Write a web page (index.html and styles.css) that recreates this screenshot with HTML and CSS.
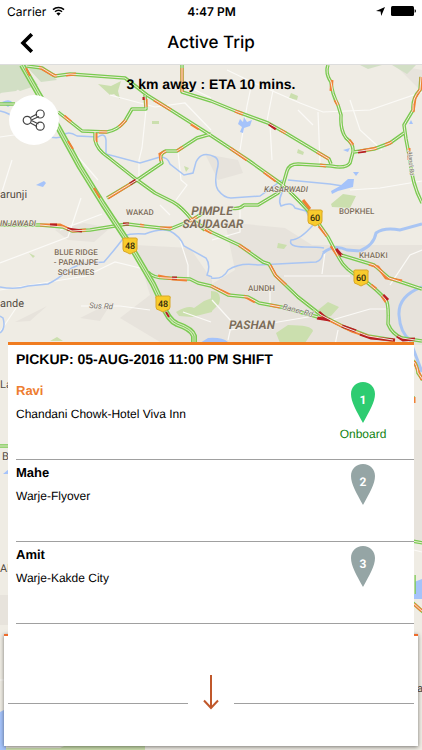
FILE: index.html
```
<!DOCTYPE html>
<html lang="en">
<head>
  <meta charset="UTF-8" />
  <meta name="viewport" content="width=device-width, initial-scale=1" />
  <title>Active Trip</title>
  <link rel="stylesheet" href="styles.css">
</head>
<body>

<div class="status-bar">
  <div class="carrier">
    <span>Carrier</span>
    <svg width="13" height="10" viewBox="0 0 13 10" aria-hidden="true">
      <path d="M1 3.6a8 8 0 0 1 11 0M3 5.8a5 5 0 0 1 7 0" fill="none" stroke="#000" stroke-width="1.5"/>
      <path d="M6.5 9.8L4.4 7.6a3 3 0 0 1 4.2 0z"/>
    </svg>
  </div>
  <div class="clock">4:47 PM</div>
  <div class="battery">
    <svg width="9" height="9" viewBox="0 0 9 9" aria-hidden="true"><path d="M9 0L5.2 9L4.6 4.5L0 4.1z"/></svg>
    <svg width="25" height="10" viewBox="0 0 25 10" aria-hidden="true">
      <rect width="23" height="10" rx="1.5"/><path d="M23.6 3.2q1.4.2 1.4 1.8t-1.4 1.8z"/>
    </svg>
  </div>
</div>

<header class="nav-bar">
  <button class="back-btn" type="button" aria-label="Back">
    <svg width="14" height="20" viewBox="0 0 14 20"><path d="M11.8 1.2L3 10l8.8 8.8" fill="none" stroke="#000" stroke-width="3.6"/></svg>
  </button>
  <h1>Active Trip</h1>
</header>

<main class="trip">
  <svg class="map" viewBox="0 65 422 685" preserveAspectRatio="xMidYMin slice" aria-hidden="true">
    <defs>
      <g id="highways">
        <path d="M22 65L38 93L58 127L80 167L103 204L130 245L153 284L163 305Q168 320 177 324Q192 329 194 336V345"/>
      </g>
      <g id="roads">
        <path d="M27 66L42 68L55 76L70 74L125 78L147 95L163 105L204 131L248 160L283 185L300 202L314 217L328 237L339 258Q345 270 361 278Q378 290 386 300Q389 305 388 324Q392 334 402 338L422 341"/>
        <path d="M0 104H15"/>
        <path d="M58 112L82 131L107 132Q118 130 125 121L132 109H146L145 95"/>
        <path d="M95 132V140Q97 150 108 157L137 180L155 193L173 202Q182 207 192 220L211 232L239 245L263 262L269 264L275 275L298 297L321 315L344 327L368 336L393 340"/>
        <path d="M107 198L137 180L162 163Q158 154 166 151H177L197 138L211 134"/>
        <path d="M182 65V92L211 101L238 112L268 123L284 132L329 159L331 164"/>
        <path d="M328 65Q325 73 331 82Q332 94 338 105L341 115Q340 130 346 138Q354 144 353 152L350 163Q346 169 331 166L298 164Q289 164 287 171L283 185"/>
        <path d="M354 152L374 149L390 143L404 133"/>
        <path d="M421 77L420 90Q412 98 413 110L404 125L406 139L410 160Q412 184 422 203"/>
        <path d="M283 185L278 193L258 205L244 205Q239 210 231 208"/>
        <path d="M0 225H40L63 227L72 231L90 230L127 224L143 226L170 229L192 220L203 213M192 220L205 230"/>
        <path d="M148 272Q153 278 165 278L190 279L198 283L211 286L228 295L248 297L259 303L281 307L318 317"/>
        <path d="M341 255L374 265L389 278L422 289"/>
        <path d="M413 361Q417 364 418 373L423 380M413 396V403M0 446H9M412 541L423 543M412 602L423 612M414 575V594"/>
      </g>
    </defs>

    <rect class="land" y="65" width="422" height="685"/>

    <g class="urban">
      <path d="M135 245L190 248L212 280L212 345H165L120 318L150 295z"/>
      <path d="M225 222L285 228L312 245L422 245V345H212V284L235 270z"/>
      <path d="M55 230L84 223L110 228L94 242L68 240zM80 318L112 302L100 321zM15 322L47 306L30 321zM395 65L422 70V92z"/>
      <path d="M205 154L238 160L243 173L218 180z"/>
      <path d="M0 595h8v30H0zM414 430h8v110h-8z"/>
    </g>

    <g class="parks">
      <path d="M0 65h23l15 20-18 6-12-8-8 11zM25 65l18 1 14 14-16 2z"/>
      <path d="M0 75l20-4 8 10-12 10-16 2zM360 65l22 0-14 4zM392 65h24l-9 9z"/>
      <path d="M98 84l13 2 10-5-3 10 2 8-6-5-4 1z"/>
      <path d="M291 93l7 3-1 4-8-2zM152 121h7v3h-7zM298 149l6 3-1 3-6-2zM331 204l12-10 13 2-6 12-18-1zM278 243l9 2-3 4-7-1z"/>
      <path d="M176 312q12-7 18-4l10-7 8-3v14l-20 5-13-1zM211 291q12 0 8 13l-8 8zM318 310l10-8 11 5-8 9-8 1zM276 333l12-8q24 0 25 6l-8 12h-25zM29 253l6 3-2 2zM184 166l5 2-3 4z"/>
      <path d="M50 341l7-4 6 4zM5 748h55l15-7h70v9H5z"/>
    </g>

    <g class="minor-roads">
      <path d="M0 137L34 132L52 113M0 198L12 160M146 110L142 148L139 160V180M66 143L98 180M110 95L155 107L185 103L211 130"/>
      <path d="M178 152L181 180L187 185L176 200M227 70L252 82L247 106L240 150M211 98L185 85M252 82L300 103L323 112L370 110L422 92"/>
      <path d="M318 112L320 163M298 110L313 125M267 121L275 80M270 125L272 160M0 263L68 237L81 198M102 214L60 230M0 290L86 276L115 262L148 270M81 306L120 306L150 310M183 312L211 322"/>
      <path d="M212 240L240 232V208M212 300L232 322L228 340M230 330L320 315M270 290V303M284 276H350M325 252L322 274M338 330L335 345M332 320L370 309H386M390 285L410 255L422 250M350 190L380 188L422 181M180 240L188 265V278M160 205L170 215"/>
      <path d="M0 680H6M414 550L422 552M0 332L18 305M350 100L360 130L382 150"/>
    </g>

    <g class="rivers">
      <path d="M0 111Q10 113 15 119L28 128Q55 142 62 136Q68 130 77 136L98 137Q105 132 106 140V154L140 163L160 157Q168 157 170 164L184 175L193 173L196 162Q202 150 215 157Q220 160 217 170Q214 184 218 190Q224 198 231 198L260 196L282 180"/>
      <path d="M0 287Q15 290 28 286L48 284Q60 278 65 272Q78 263 92 263L104 262Q117 247 125 236Q130 233 145 234Q160 228 170 231Q180 236 184 246L206 258Q211 265 207 275L212 277"/>
      <path d="M288 180L330 184L343 186M285 187Q277 200 281 206Q292 201 295 208L306 211L313 225"/>
      <path d="M313 225Q300 240 291 240Q288 247 305 247Q318 247 324 248" />
      <path d="M211 278Q223 280 228 270Q240 262 258 265L316 262Q322 260 323 253"/>
      <path class="wide" d="M323 253Q334 244 347 250L360 251Q374 245 376 233Q384 227 400 230L422 224"/>
      <path class="wide" d="M422 287Q398 296 399 315Q400 333 411 341M411 343L422 372"/>
      <path d="M0 333Q6 328 3 318L0 316"/>
    </g>
    <g class="water">
      <path d="M36 185l8-4 2 2-3 4zM2 102q8-4 11 1l-5 4zM240 119l3 3 1-5 3 5 5-2-2 6-6 2-1 5-3-1 2-5-4-3zM331 191l9-5 8-7 6 0-1 8-15 4-6 3zM353 172h6l-3 4zM343 150l7-2-2 4zM409 124l2-4 2 4zM200 343l8-5q14-1 20 4v4h-28z"/>
      <path d="M3 474l6-5v5zM414 582l8-3v20h-8zM0 712l4-2v40h-4zM0 712h6v38H0z"/>
    </g>

    <use href="#roads" class="road-line"/>

    <g class="slow">
      <path d="M39 67L53 75L57 76M66 75L76 74M64 116l7 6M96 133v9M99 132h8M119 127l7-7M146 107V99M154 100l17 10M191 124l8 5M108 198L132 183M161 161L160 154L166 151M177 151l6-4"/>
      <path d="M235 111l8 3M280 130l6 3M317 152L329 159M332 80l-1 11M335 100l3 5M349 140l4 5M320 165l6 1M360 151l17-3M385 145l7-3M230 148l17 12M264 172l12 9M303 200l7 9M421 77V88L415 98L413 112M409 148v12M182 68v24"/>
      <path d="M40 225H60L73 231L86 230M140 225l4 1M160 228h12M186 223L197 217M190 218l8 8M204 229l8 4M158 276l15 3 14 1M211 286l11 5 8 4M244 296l11 6M270 305l10 2M239 245l11 7M270 265l6 11 10 9M319 226l8 10M331 246l7 10M371 285l5 4M382 296l4 6M369 264l9 3 8 11 16 3M321 316L352 331L370 337L395 341M414 361l5 12 3 7M414 397v6M414 604l8 7"/>
    </g>
    <g class="jammed">
      <path d="M130 184l6-4M144 97v3M269 124l7 5M358 152l8-1M50 225h7M67 229l15 2M123 224h6M172 278h5M336 249l6 7M383 295l5 5M319 312l9 8M317 318l13 2M342 326l14 5M360 334l11 4 24 2M397 336l6 4 12-1"/>
    </g>
    <use href="#roads" class="road-median"/>

    <use href="#highways" class="highway-line"/>
    <use href="#highways" class="highway-lanes"/>
    <use href="#highways" class="highway-median"/>
    <path class="slow-lane" d="M26 68l4 8M68 141l5 8M94 188l6 10"/>
    <path class="jammed-lane" d="M166 312l3 5"/>

    <g class="shields">
      <path d="M124 238h12q2 0 1 3v8q0 3-3 3l-4 2-4-2q-3 0-3-3v-8q-1-3 1-3z"/>
      <path d="M157 296h12q2 0 1 3v8q0 3-3 3l-4 2-4-2q-3 0-3-3v-8q-1-3 1-3z"/>
      <path d="M309 210h12q2 0 1 3v8q0 3-3 3l-4 2-4-2q-3 0-3-3v-8q-1-3 1-3z"/>
      <path d="M355 270h12q2 0 1 3v8q0 3-3 3l-4 2-4-2q-3 0-3-3v-8q-1-3 1-3z"/>
      <text x="130" y="249">48</text>
      <text x="163" y="307">48</text>
      <text x="315" y="221">60</text>
      <text x="361" y="281">60</text>
    </g>

    <g class="places">
      <text class="village" x="0" y="198">arunji</text>
      <text class="village" x="0" y="307">ande</text>
      <text class="village" x="0" y="388">La</text>
      <text class="village" x="2" y="460">B</text>
      <text class="village" x="0" y="572">Al</text>
      <text class="village" x="417" y="692">ac</text>
      <text class="area italic" x="0" y="226">INJAWADI</text>
      <text class="area" x="126" y="215">WAKAD</text>
      <text class="area italic" x="264" y="192">KASARWADI</text>
      <text class="area" x="339" y="214">BOPKHEL</text>
      <text class="area" x="359" y="258">KHADKI</text>
      <text class="area" x="248" y="291">AUNDH</text>
      <text class="area middle" x="76" y="255">BLUE RIDGE</text>
      <text class="area middle" x="76" y="265">- PARANJPE</text>
      <text class="area middle" x="76" y="275">SCHEMES</text>
      <text class="town middle" x="212" y="215">PIMPLE</text>
      <text class="town middle" x="213" y="228">SAUDAGAR</text>
      <text class="town" x="229" y="329">PASHAN</text>
      <text class="street" x="89" y="308" transform="rotate(3 89 308)">Sus Rd</text>
      <text class="street" x="282" y="309" transform="rotate(15 282 309)">Baner Rd</text>
      <text class="street small" x="408" y="151" transform="rotate(85 408 151)">Alandi Rd</text>
    </g>
  </svg>

  <p class="eta">3 km away : ETA 10 mins.</p>
  <button class="share-btn" type="button" aria-label="Share trip">
    <svg width="24" height="24" viewBox="0 0 24 24">
      <g fill="none" stroke="#444" stroke-width="1.2">
        <path d="M8.5 9.5L15 6M9.5 12L17 8.5M9.5 12.5L16.5 16M8.5 15L15 18.5"/>
        <circle cx="5.2" cy="12.3" r="4"/>
        <circle cx="18.2" cy="6" r="4"/>
        <circle cx="18.2" cy="18.2" r="4"/>
      </g>
    </svg>
  </button>

  <section class="panel">
    <div class="pickup">
      <h2>PICKUP: 05-AUG-2016 11:00 PM SHIFT</h2>
      <ol class="stops">
        <li class="stop current">
          <div>
            <h3>Ravi</h3>
            <p>Chandani Chowk-Hotel Viva Inn</p>
          </div>
          <div class="marker">
            <svg width="24" height="41" viewBox="0 0 24 41">
              <path d="M12 0C5 0 0 5.4 0 12C0 20 5.500 29 12 41C18.500 29 24 20 24 12C24 5.4 19 0 12 0z"/>
              <text x="12" y="22">1</text>
            </svg>
            <span>Onboard</span>
          </div>
        </li>
        <li class="stop">
          <div>
            <h3>Mahe</h3>
            <p>Warje-Flyover</p>
          </div>
          <div class="marker">
            <svg width="24" height="41" viewBox="0 0 24 41">
              <path d="M12 0C5 0 0 5.4 0 12C0 20 5.500 29 12 41C18.500 29 24 20 24 12C24 5.4 19 0 12 0z"/>
              <text x="12" y="22">2</text>
            </svg>
          </div>
        </li>
        <li class="stop">
          <div>
            <h3>Amit</h3>
            <p>Warje-Kakde City</p>
          </div>
          <div class="marker">
            <svg width="24" height="41" viewBox="0 0 24 41">
              <path d="M12 0C5 0 0 5.4 0 12C0 20 5.500 29 12 41C18.500 29 24 20 24 12C24 5.4 19 0 12 0z"/>
              <text x="12" y="22">3</text>
            </svg>
          </div>
        </li>
      </ol>
    </div>
    <div class="sheet">
      <button class="collapse-btn" type="button" aria-label="Hide stops">
        <svg width="18" height="56" viewBox="0 0 18 56"><path d="M9 0V33M2 25.5L9 33L16 25.5" fill="none" stroke="#c0582b" stroke-width="2"/></svg>
      </button>
    </div>
  </section>
</main>

</body>
</html>
```
FILE: styles.css
```
* {
  box-sizing: border-box;
}
body {
  margin: 0;
  min-height: 100vh;
  display: flex;
  flex-direction: column;
  font-family: "Liberation Sans", Arial, sans-serif;
  font-size: 13px;
  color: #000;
  background: #fff;
  text-rendering: geometricPrecision;
}
h1, h2, h3, p, ol {
  margin: 0;
  padding: 0;
}
button {
  padding: 0;
  border: none;
  background: none;
  cursor: pointer;
}
svg {
  display: block;
}

/* top bars */
.status-bar {
  display: grid;
  grid-template-columns: 1fr auto 1fr;
  align-items: center;
  height: 22px;
  padding: 0 6px 0 7px;
  font-family: Inter, sans-serif;
  font-size: 12px;
}
.carrier, .battery {
  display: flex;
  align-items: center;
  gap: 6px;
}
.battery {
  justify-content: flex-end;
}
.clock {
  font-weight: 600;
}
.nav-bar {
  display: grid;
  grid-template-columns: 44px 1fr 44px;
  align-items: center;
  height: 43px;
  border-bottom: 1px solid #ddd;
}
.back-btn {
  display: flex;
  justify-content: flex-end;
  padding-right: 10px;
}
.nav-bar h1 {
  font-family: Inter, sans-serif;
  font-size: 17px;
  font-weight: 500;
  text-align: center;
}

/* map */
.trip {
  position: relative;
  flex: 1;
  display: flex;
  flex-direction: column;
  overflow: hidden;
}
.map {
  position: absolute;
  top: 0;
  left: 0;
  width: 100%;
  height: 100%;
}
.land {
  fill: #efece4;
}
.urban {
  fill: #e7e3dc;
}
.parks {
  fill: #cbdfae;
}
.parks path:first-child, .parks path:nth-child(2) {
  fill: #d2dfc5;
}
.minor-roads {
  fill: none;
  stroke: #fbfaf7;
  stroke-width: 1.2;
}
.rivers {
  fill: none;
  stroke: #a9c5f3;
  stroke-width: 1.5;
}
.rivers .wide {
  stroke-width: 3;
}
.water {
  fill: #a5c3fa;
}
.road-line, .road-median, .highway-line, .highway-lanes, .highway-median {
  fill: none;
  stroke: #79ca50;
  stroke-width: 3.5;
  stroke-linejoin: round;
}
.road-median {
  stroke: #f0ecdc;
  stroke-width: 1;
}
.highway-line {
  stroke-width: 6;
}
.highway-lanes {
  stroke: #d5e8bd;
  stroke-width: 3;
}
.highway-median {
  stroke-width: 1;
}
.slow, .jammed, .slow-lane, .jammed-lane {
  fill: none;
  stroke: #f08034;
  stroke-width: 3;
}
.jammed, .jammed-lane {
  stroke: #b81e22;
}
.slow-lane, .jammed-lane {
  stroke-width: 2;
}
.shields path {
  fill: #f8cb2c;
  stroke: #d9a728;
  stroke-width: 1;
}
.shields text {
  font: 500 9px Roboto, sans-serif;
  text-anchor: middle;
  fill: #332b10;
}
.places {
  font-family: Roboto, sans-serif;
  fill: #7d6e5b;
  stroke: #f4f1ea;
  stroke-width: 1;
  paint-order: stroke;
}
.places .village {
  font-size: 11px;
  fill: #554d44;
}
.places .area {
  font-size: 8px;
  font-weight: 500;
}
.places .town {
  font-size: 12px;
  font-weight: 700;
  font-style: italic;
}
.places .street {
  font-size: 8px;
  font-style: italic;
  fill: #77716a;
}
.places .small {
  font-size: 6px;
}
.places .italic {
  font-style: italic;
}
.places .middle {
  text-anchor: middle;
}

/* over the map */
.eta {
  position: relative;
  margin-top: 10px;
  font-size: 14px;
  line-height: 18px;
  font-weight: bold;
  text-align: center;
}
.share-btn {
  position: relative;
  display: flex;
  align-items: center;
  justify-content: center;
  width: 50px;
  height: 50px;
  margin: 2px 9px 16px;
  border-radius: 50%;
  background: #fff;
}

/* trip details */
.panel {
  position: relative;
  margin: auto 4px 4px;
}
.pickup {
  position: relative;
  margin: 0 4px;
  padding-bottom: 12px;
  border-top: 3px solid #f07c20;
  background: #fff;
}
.pickup h2 {
  padding: 0 8px 5px;
  font-size: 14px;
  line-height: 28px;
}
.stops {
  list-style: none;
}
.stop {
  display: flex;
  justify-content: space-between;
  height: 82px;
  margin-left: 8px;
  padding-top: 4px;
  border-bottom: 1px solid #a0a0a0;
}
.stop h3 {
  font-size: 13px;
  line-height: 18px;
}
.stop p {
  margin-top: 5px;
  font-size: 12px;
  line-height: 18px;
}
.current h3 {
  color: #ee7d30;
}
.marker {
  display: flex;
  flex-direction: column;
  align-items: center;
  gap: 3px;
  width: 102px;
}
.marker svg {
  fill: #95a5a5;
}
.marker text {
  font: bold 12px Roboto, sans-serif;
  text-anchor: middle;
  fill: #fff;
}
.current .marker svg {
  fill: #2ecc71;
}
.marker span {
  font-size: 12px;
  line-height: 16px;
  color: #128212;
}
.sheet {
  display: flex;
  align-items: center;
  margin-top: -2px;
  padding: 39px 4px 15px;
  border-top: 2px solid #ee6c2c;
  background: #fff;
  box-shadow: 0 1px 4px rgba(0, 0, 0, 0.5);
}
.sheet::before, .sheet::after {
  content: "";
  flex: 1;
  height: 1px;
  background: #a0a0a0;
}
.collapse-btn {
  display: flex;
  justify-content: center;
  width: 46px;
}
```
